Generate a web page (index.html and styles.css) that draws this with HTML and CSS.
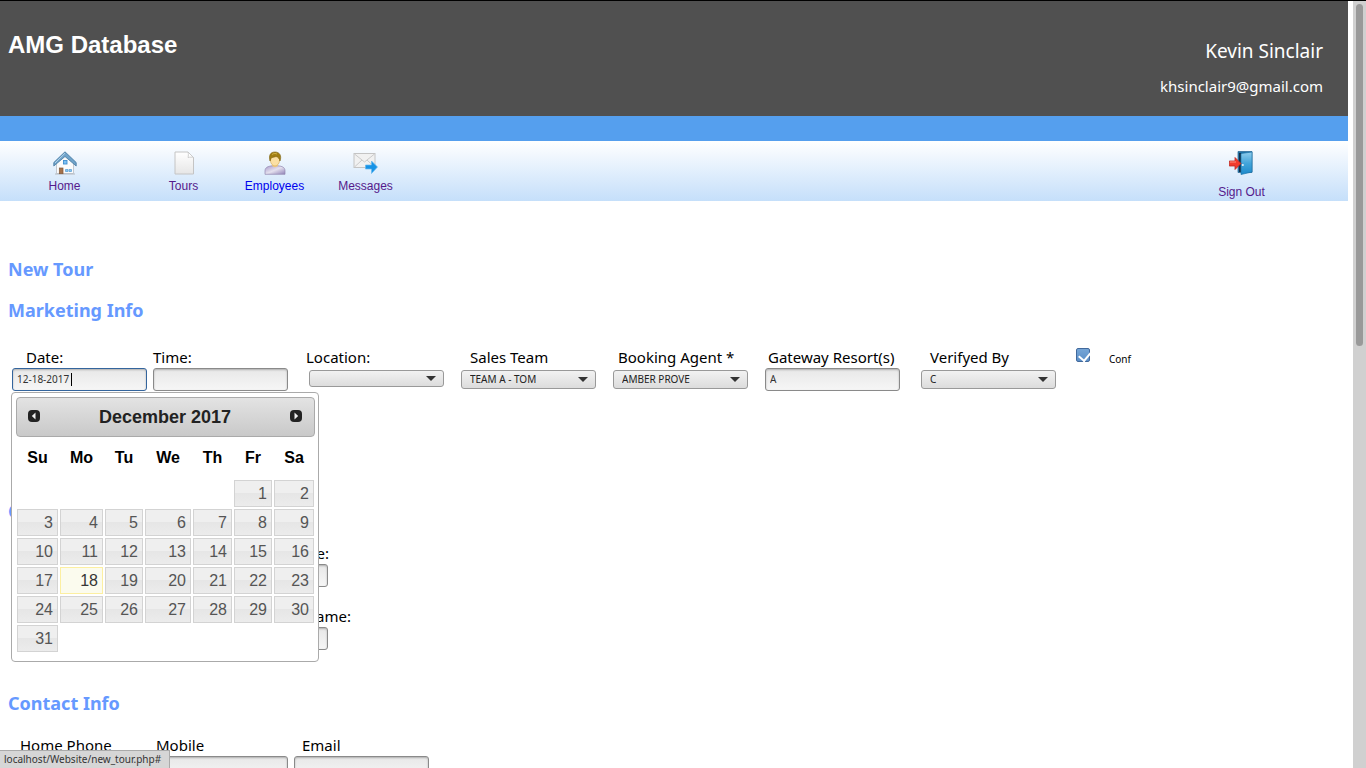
FILE: index.html
```html
<!DOCTYPE html>
<html lang="en">
<head>
    <meta charset="UTF-8">
    <meta name="viewport" content="width=device-width, initial-scale=1.0">
    <title>AMG Database</title>
    <link rel="stylesheet" href="styles.css">
</head>
<body>
    <div class="page">
        <header class="header">
            <h1>AMG Database</h1>
            <div class="user">
                <p class="user-name">Kevin Sinclair</p>
                <p class="user-email">khsinclair9@gmail.com</p>
            </div>
        </header>
        <div class="stripe"></div>

        <nav class="nav">
            <a href="#" class="nav-item home">
                <svg width="24" height="24" viewBox="0 0 24 24">
                    <path d="M3.500 11L12 3l8.500 8v11.500h-17z" fill="#fbfbfb" stroke="#c3c8cf"/>
                    <path d="M2 23h20" stroke="#b5bac0"/>
                    <path d="M12 .8L.8 11.500V15L12 5.500 23.200 15v-3.500z" fill="#6fa3ca" stroke="#43779f" stroke-width=".8"/>
                    <path d="M12 2.200L2 12" stroke="#b4d4eb" fill="none"/>
                    <rect x="10.500" y="9.500" width="3.500" height="3.500" fill="#7cc0f2" stroke="#3f8fd0" stroke-width=".9"/>
                    <rect x="6.300" y="17" width="3.700" height="5.700" fill="#a3714a" stroke="#80583a" stroke-width=".7"/>
                    <path d="M12.500 18.500h2.500v2h-2.500zM16 18.500h2.500v2H16z" fill="#8ac6f0" stroke="#5fa3d8" stroke-width=".8"/>
                </svg>
                <span>Home</span>
            </a>
            <a href="#" class="nav-item">
                <svg width="24" height="24" viewBox="0 0 24 24">
                    <defs>
                        <linearGradient id="paper" x1="0" y1="0" x2="0" y2="1">
                            <stop offset="0" stop-color="#fff"/>
                            <stop offset="1" stop-color="#e6e6e6"/>
                        </linearGradient>
                    </defs>
                    <path d="M3 1h13l5.500 5.500V23H3z" fill="url(#paper)" stroke="#c4c4c4"/>
                    <path d="M16 1c.5 2 .5 3.500 0 5.500 2-.5 4-.5 5.500 0z" fill="#fff" stroke="#c4c4c4" stroke-width=".8"/>
                </svg>
                <span>Tours</span>
            </a>
            <a href="#" class="nav-item unvisited">
                <svg width="24" height="24" viewBox="0 0 24 24">
                    <defs>
                        <linearGradient id="shirt" x1="0" y1="0" x2="1" y2="1">
                            <stop offset="0" stop-color="#a99bcc"/>
                            <stop offset=".5" stop-color="#e4e0ee"/>
                            <stop offset="1" stop-color="#9183b8"/>
                        </linearGradient>
                    </defs>
                    <path d="M2 23.300v-3.500c0-3.500 3.500-4.600 7-5h6c4 .4 7 1.500 7 5v3.500z" fill="url(#shirt)" stroke="#9287b0" stroke-width=".7"/>
                    <path d="M9 14.500c1.500 2.200 4.500 2.200 6 0l-1-2.500h-4z" fill="#f1cf8a"/>
                    <ellipse cx="12" cy="9" rx="4.600" ry="6" fill="#fbe0a4" stroke="#d4a54f" stroke-width=".6"/>
                    <path d="M7 10C5.500 4 7.500 1 12 1s7 3.500 5 9c-.5-2.500-2-4-4-4.500C11 6.500 8.500 6 8 7.500z" fill="#a17e13" stroke="#7b5f0c" stroke-width=".6"/>
                    <path d="M9 3.500c2-1.500 4-1 5-.5" stroke="#d1b344" fill="none"/>
                </svg>
                <span>Employees</span>
            </a>
            <a href="#" class="nav-item">
                <svg width="26" height="24" viewBox="0 0 26 24">
                    <rect x="1" y="2.500" width="21" height="14" fill="#f1f1f1" stroke="#c4c4c4"/>
                    <path d="M1.500 16l7.500-7M21.500 16L14 9M1.500 3l10 8 10-8" fill="none" stroke="#cacaca"/>
                    <path d="M12.500 14h6v-4l6 6-6 6.500v-4.500h-6z" fill="#1793e6" stroke="#69b9ee" stroke-width=".7"/>
                </svg>
                <span>Messages</span>
            </a>
            <a href="#" class="nav-item sign-out">
                <svg width="26" height="24" viewBox="0 0 26 24">
                    <defs>
                        <linearGradient id="door" x1="0" y1="0" x2="0" y2="1">
                            <stop offset="0" stop-color="#91cdec"/>
                            <stop offset=".5" stop-color="#43a5da"/>
                            <stop offset="1" stop-color="#1c89cb"/>
                        </linearGradient>
                    </defs>
                    <path d="M9 .5h14v21H9z" fill="#2073a7" stroke="#326f99" stroke-width=".8"/>
                    <path d="M10 2h3v19h-3z" fill="#122e48"/>
                    <path d="M12 2.500L23 1v20l-11 2.500z" fill="url(#door)" stroke="#1c75ab" stroke-width=".7"/>
                    <path d="M.3 10h5.700V6.500l6 6-6 6V15H.3z" fill="#f13b2d" stroke="#bb2923" stroke-width=".8"/>
                    <path d="M1 11h6" stroke="#ff907e"/>
                    <circle cx="13.800" cy="14" r="1.100" fill="#e2f2fa"/>
                </svg>
                <span>Sign Out</span>
            </a>
        </nav>

        <form class="tour-form">
            <h2>New Tour</h2>

            <h2>Marketing Info</h2>
            <div class="fields marketing">
                <div class="field date-field">
                    <label for="date" class="indent-lg">Date:</label>
                    <input type="text" id="date" class="focused" value="12-18-2017">
                    <span class="caret"></span>

                    <div class="datepicker">
                        <div class="datepicker-header">
                            <button type="button" aria-label="Prev">
                                <svg width="12" height="12" viewBox="0 0 12 12"><rect width="12" height="12" rx="4" fill="#222"/><path d="M7.500 2.500v7L3.800 6z" fill="#eee"/></svg>
                            </button>
                            <span>December 2017</span>
                            <button type="button" aria-label="Next">
                                <svg width="12" height="12" viewBox="0 0 12 12"><rect width="12" height="12" rx="4" fill="#222"/><path d="M4.500 2.500v7L8.200 6z" fill="#eee"/></svg>
                            </button>
                        </div>
                        <table>
                            <colgroup>
                                <col class="col-su"><col class="col-mo"><col class="col-tu"><col class="col-we"><col class="col-th"><col class="col-fr"><col class="col-sa">
                            </colgroup>
                            <thead>
                                <tr><th>Su</th><th>Mo</th><th>Tu</th><th>We</th><th>Th</th><th>Fr</th><th>Sa</th></tr>
                            </thead>
                            <tbody>
                                <tr><td></td><td></td><td></td><td></td><td></td><td><a href="#">1</a></td><td><a href="#">2</a></td></tr>
                                <tr><td><a href="#">3</a></td><td><a href="#">4</a></td><td><a href="#">5</a></td><td><a href="#">6</a></td><td><a href="#">7</a></td><td><a href="#">8</a></td><td><a href="#">9</a></td></tr>
                                <tr><td><a href="#">10</a></td><td><a href="#">11</a></td><td><a href="#">12</a></td><td><a href="#">13</a></td><td><a href="#">14</a></td><td><a href="#">15</a></td><td><a href="#">16</a></td></tr>
                                <tr><td><a href="#">17</a></td><td><a href="#" class="today">18</a></td><td><a href="#">19</a></td><td><a href="#">20</a></td><td><a href="#">21</a></td><td><a href="#">22</a></td><td><a href="#">23</a></td></tr>
                                <tr><td><a href="#">24</a></td><td><a href="#">25</a></td><td><a href="#">26</a></td><td><a href="#">27</a></td><td><a href="#">28</a></td><td><a href="#">29</a></td><td><a href="#">30</a></td></tr>
                                <tr><td><a href="#">31</a></td><td></td><td></td><td></td><td></td><td></td><td></td></tr>
                            </tbody>
                        </table>
                    </div>
                </div>
                <div class="field">
                    <label for="time">Time:</label>
                    <input type="text" id="time">
                </div>
                <div class="field">
                    <label for="location">Location:</label>
                    <div class="select empty">
                        <select id="location"><option></option></select>
                    </div>
                </div>
                <div class="field">
                    <label for="team" class="indent-md">Sales Team</label>
                    <div class="select">
                        <select id="team"><option>TEAM A - TOM</option></select>
                    </div>
                </div>
                <div class="field">
                    <label for="agent" class="indent-sm">Booking Agent *</label>
                    <div class="select">
                        <select id="agent"><option>AMBER PROVE</option></select>
                    </div>
                </div>
                <div class="field">
                    <label for="resorts" class="indent-xs">Gateway Resort(s)</label>
                    <input type="text" id="resorts" value="A">
                </div>
                <div class="field">
                    <label for="verified" class="indent-md">Verifyed By</label>
                    <div class="select">
                        <select id="verified"><option>C</option></select>
                    </div>
                </div>
                <div class="check">
                    <input type="checkbox" id="conf" checked>
                    <label for="conf">Conf</label>
                </div>
            </div>

            <h2>Customer Info</h2>
            <div class="fields customer">
                <div class="field">
                    <label for="firstName" class="name-label">Name:</label>
                    <input type="text" id="firstName">
                </div>
                <div class="field">
                    <label for="lastName" class="name-label wide">Name:</label>
                    <input type="text" id="lastName">
                </div>
            </div>

            <h2>Contact Info</h2>
            <div class="fields contact">
                <div class="field">
                    <label for="phone" class="indent-sm">Home Phone</label>
                    <input type="text" id="phone">
                </div>
                <div class="field">
                    <label for="mobile" class="indent-xs">Mobile</label>
                    <input type="text" id="mobile">
                </div>
                <div class="field">
                    <label for="email" class="indent-sm">Email</label>
                    <input type="text" id="email">
                </div>
            </div>
        </form>
    </div>

    <div class="scrollbar"><div class="thumb"></div></div>
    <div class="status">localhost/Website/new_tour.php#</div>
</body>
</html>
```

FILE: styles.css
```css
* {
    box-sizing: border-box;
}

body {
    margin: 0;
    height: 100vh;
    display: flex;
    overflow: hidden;
    background-color: #fff;
    border-top: 1px solid #000;
    font-family: "Noto Sans", sans-serif;
    font-size: 15px;
    color: #000;
}

.page {
    flex: 1;
    min-width: 0;
    margin-right: 5px;
}

/* header */

.header {
    display: flex;
    justify-content: space-between;
    height: 115px;
    padding: 30px 25px 0 8px;
    background-color: #505050;
    color: #fff;
}

.header h1 {
    margin: 0;
    font: bold 24px/28px "Liberation Sans", Arial, sans-serif;
}

.user {
    text-align: right;
}

.user p {
    margin: 0;
}

.user-name {
    padding-top: 8px;
    font-size: 19px;
    line-height: 24px;
}

.user .user-email {
    margin-top: 12px;
    line-height: 22px;
}

.stripe {
    height: 25px;
    background-color: #559fee;
}

/* navigation */

.nav {
    display: flex;
    height: 60px;
    padding: 10px 61px 0 19px;
    background: linear-gradient(#fff, #c5dffa);
}

.nav-item {
    display: flex;
    flex-direction: column;
    align-items: center;
    gap: 4px;
    width: 91px;
    font: 12px/14px "Liberation Sans", Arial, sans-serif;
    color: #551a8b;
    text-decoration: none;
}

.home {
    margin-right: 28px;
}

.unvisited {
    color: #0000ee;
}

.sign-out {
    gap: 10px;
    margin-left: auto;
}

/* form */

.tour-form {
    padding: 58px 8px 0;
}

h2 {
    margin: 0 0 21px;
    font-size: 18px;
    line-height: 20px;
    color: #6699ff;
}

.fields {
    display: grid;
    margin: 0 4px;
}

.marketing {
    grid-template-columns: 141px 153px 152px 152px 155px 153px 158px 1fr;
    margin-top: 26px;
    margin-bottom: 110px;
}

.customer {
    row-gap: 18px;
    padding-left: 181px;
    margin-bottom: 43px;
}

.contact {
    grid-template-columns: 141px 141px 141px;
}

.field > label {
    display: block;
    line-height: 22px;
    white-space: nowrap;
}

.indent-xs {
    padding-left: 3px;
}

.indent-sm {
    padding-left: 8px;
}

.indent-md {
    padding-left: 12px;
}

.indent-lg {
    padding-left: 14px;
}

.name-label {
    width: 136px;
    text-align: right;
}

.name-label.wide {
    width: 158px;
}

input[type="text"] {
    display: block;
    width: 135px;
    height: 23px;
    padding: 0 4px 2px;
    border: 1px solid #8a8a8a;
    border-radius: 3px;
    background: linear-gradient(#e8e8e8, #f6f6f6);
    box-shadow: inset 0 1px 2px rgba(0, 0, 0, 0.25);
    font: 10px "Noto Sans", sans-serif;
    color: #333;
    outline: none;
}

input[type="text"].focused {
    border-color: #34659d;
}

.select {
    position: relative;
    width: 135px;
    height: 19px;
    margin: 2px 0 0 3px;
}

.select.empty {
    height: 17px;
}

.select select {
    display: block;
    width: 100%;
    height: 100%;
    padding: 0 8px 1px;
    appearance: none;
    border: 1px solid #999;
    border-radius: 3px;
    background: linear-gradient(#f2f2f2, #dcdcdc);
    font: 10px "Noto Sans", sans-serif;
    color: #222;
}

.select::after {
    content: "";
    position: absolute;
    top: 50%;
    right: 8px;
    margin-top: -3px;
    border: 5px solid transparent;
    border-top-color: #333;
    border-bottom: 0;
    pointer-events: none;
}

.check {
    display: flex;
    align-items: flex-start;
    gap: 19px;
}

.check input {
    position: relative;
    width: 14px;
    height: 14px;
    margin: 2px 0 0;
    appearance: none;
    border: 1px solid #41699c;
    border-radius: 2px;
    background: linear-gradient(#75a5d6, #5b8fc8);
}

.check input:checked::after {
    content: "";
    position: absolute;
    left: 4px;
    top: 0;
    width: 6px;
    height: 10px;
    border: solid #fff;
    border-width: 0 2px 2px 0;
    transform: rotate(40deg);
}

.check label {
    padding-top: 6px;
    font-size: 10px;
    line-height: 14px;
}

/* datepicker */

.date-field {
    position: relative;
}

.caret {
    position: absolute;
    left: 59px;
    top: 27px;
    width: 1px;
    height: 13px;
    background-color: #000;
}

.datepicker {
    position: absolute;
    z-index: 1;
    top: 46px;
    left: -1px;
    width: 308px;
    padding: 4px 3px 8px 4px;
    border: 1px solid #aaa;
    border-radius: 4px;
    background-color: #fff;
    font-family: "Liberation Sans", Arial, sans-serif;
}

.datepicker-header {
    display: flex;
    justify-content: space-between;
    align-items: center;
    height: 40px;
    padding: 0 12px 0 11px;
    border: 1px solid #aaa;
    border-radius: 4px;
    background: linear-gradient(#e3e3e3, #c9c9c9);
    font-size: 18px;
    font-weight: bold;
    color: #222;
}

.datepicker-header button {
    display: flex;
    padding: 0 0 2px;
    border: 0;
    background: none;
    cursor: pointer;
}

.datepicker table {
    width: 299px;
    table-layout: fixed;
    border-collapse: collapse;
}

.col-su { width: 43px; }
.col-mo { width: 45px; }
.col-tu { width: 40px; }
.col-we { width: 48px; }
.col-th { width: 41px; }
.col-fr { width: 40px; }
.col-sa { width: 42px; }

.datepicker th {
    height: 42px;
    padding: 0;
    font-size: 16px;
}

.datepicker td {
    height: 29px;
    padding: 1px;
}

.datepicker td a {
    display: block;
    height: 27px;
    padding: 0 4px;
    border: 1px solid #d3d3d3;
    background: linear-gradient(#efefef 50%, #e6e6e6 50%, #ececec);
    font-size: 16px;
    line-height: 25px;
    text-align: right;
    text-decoration: none;
    color: #555;
}

.datepicker td a.today {
    border-color: #fcefa1;
    background: #fbfbee;
    color: #363636;
}

/* scrollbar and link status */

.scrollbar {
    width: 13px;
    padding: 3px;
    background-color: #d0d0d0;
}

.thumb {
    width: 7px;
    height: 45%;
    border-radius: 4px;
    background-color: #999;
}

.status {
    position: fixed;
    z-index: 2;
    left: 0;
    bottom: 0;
    padding: 0 8px 0 4px;
    border: solid #aaa;
    border-width: 1px 1px 0 0;
    background-color: #d6d6d6;
    font-size: 10px;
    line-height: 17px;
    color: #333;
}
```
